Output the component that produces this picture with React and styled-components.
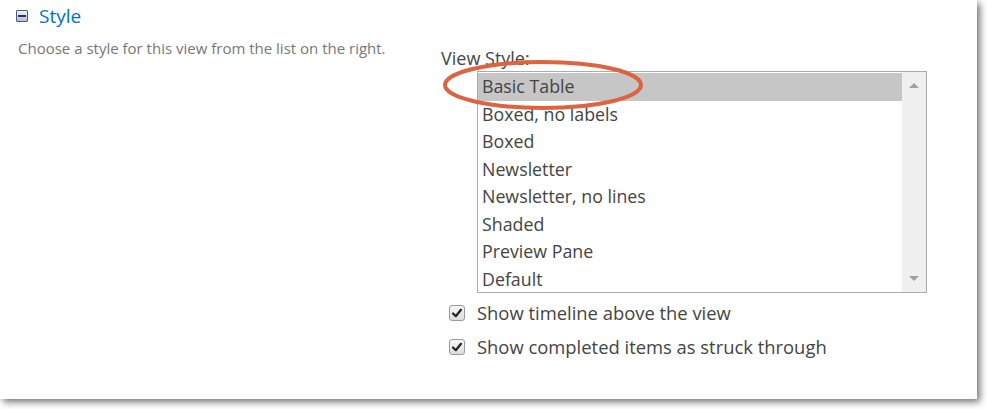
import React from "react";
import styled, { createGlobalStyle } from "styled-components";

const Global = createGlobalStyle`
  html, body { margin: 0; padding: 0; background: #fff; }
  body { font-family: "Open Sans", "Noto Sans", sans-serif; }
`;

const Frame = styled.div`
  width: 987px;
  height: 409px;
  background: #fff;
  overflow: hidden;
`;

const Page = styled.div`
  width: 977px;
  height: 399px;
  background: #fff;
  box-shadow: 3px 3px 7px rgba(0,0,0,0.55);
  box-sizing: border-box;
  padding: 4px 0 0 15px;
`;

const Header = styled.div`
  display: flex;
  align-items: center;
  gap: 11px;
  height: 24px;
`;

const Toggle = styled.span`
  width: 12px;
  height: 12px;
  box-sizing: border-box;
  border: 1px solid #4a5a78;
  border-radius: 1px;
  background: linear-gradient(#eef2f8, #b4bfd2);
  display: flex;
  align-items: center;
  justify-content: center;
  margin-left: 1px;
  &::after {
    content: "";
    width: 8px;
    height: 2px;
    background: #2a3550;
  }
`;

const Title = styled.span`
  font-family: "Open Sans", sans-serif;
  font-size: 19px;
  color: #0072c6;
  line-height: 24px;
`;

const Body = styled.div`
  display: grid;
  grid-template-columns: 426px 1fr;
  margin-top: 9px;
`;

const Description = styled.div`
  font-size: 15px;
  color: #777;
  padding-left: 3px;
  line-height: 22px;
`;

const Form = styled.div`
  display: flex;
  flex-direction: column;
  padding-top: 10px;
`;

const Label = styled.div`
  font-size: 18px;
  color: #444;
  line-height: 22px;
`;

const ListWrap = styled.div`
  position: relative;
  margin-left: 36px;
  width: 450px;
`;

const ListBox = styled.div`
  display: flex;
  height: 222px;
  box-sizing: border-box;
  border: 1px solid #ababab;
  background: #fff;
  margin-top: 2px;
`;

const Options = styled.div`
  flex: 1;
  padding-top: 1px;
`;

const Option = styled.div`
  font-size: 17.8px;
  color: #444;
  height: 27.5px;
  line-height: 27.5px;
  padding-left: 4px;
  background: ${p => (p.$selected ? "#c6c6c6" : "transparent")};
`;

const Scrollbar = styled.div`
  width: 24px;
  background: #f0f0f0;
  display: flex;
  flex-direction: column;
  justify-content: space-between;
  align-items: center;
  padding: 11px 0 11px;
  box-sizing: border-box;
`;

const Arrow = styled.span`
  width: 0;
  height: 0;
  border-left: 5px solid transparent;
  border-right: 5px solid transparent;
  ${p =>
    p.$up
      ? "border-bottom: 5px solid #a0a0a0;"
      : "border-top: 5px solid #a0a0a0;"}
`;

const Highlight = styled.svg`
  position: absolute;
  left: -36px;
  top: -12px;
  pointer-events: none;
`;

const Checks = styled.div`
  display: flex;
  flex-direction: column;
  gap: 12px;
  margin-top: 9px;
  margin-left: 8px;
`;

const CheckRow = styled.label`
  display: flex;
  align-items: center;
  gap: 12px;
  font-size: 18.4px;
  color: #444;
  line-height: 22px;
`;

const Box = styled.span`
  width: 16px;
  height: 16px;
  box-sizing: border-box;
  border: 1px solid #9a9a9a;
  border-radius: 3px;
  background: linear-gradient(#f6f6f6, #dcdcdc);
  display: flex;
  align-items: center;
  justify-content: center;
`;

const styles = [
  "Basic Table",
  "Boxed, no labels",
  "Boxed",
  "Newsletter",
  "Newsletter, no lines",
  "Shaded",
  "Preview Pane",
  "Default",
];

const Check = ({ children }) => (
  <CheckRow>
    <Box>
      <svg width="12" height="12" viewBox="0 0 12 12">
        <path d="M2 6.5 L4.8 9.2 L10 2.8" fill="none" stroke="#222" strokeWidth="2.2" strokeLinecap="round" strokeLinejoin="round" />
      </svg>
    </Box>
    {children}
  </CheckRow>
);

export default function App() {
  return (
    <>
      <Global />
      <Frame>
        <Page>
          <Header>
            <Toggle />
            <Title>Style</Title>
          </Header>
          <Body>
            <Description>Choose a style for this view from the list on the right.</Description>
            <Form>
              <Label>View Style:</Label>
              <ListWrap>
                <ListBox>
                  <Options>
                    {styles.map((s, i) => (
                      <Option key={s} $selected={i === 0}>{s}</Option>
                    ))}
                  </Options>
                  <Scrollbar>
                    <Arrow $up />
                    <Arrow />
                  </Scrollbar>
                </ListBox>
                <Highlight width="210" height="56" viewBox="0 0 210 56">
                  <ellipse cx="102" cy="28" rx="98" ry="23" fill="none" stroke="#dc6440" strokeWidth="4" />
                </Highlight>
              </ListWrap>
              <Checks>
                <Check>Show timeline above the view</Check>
                <Check>Show completed items as struck through</Check>
              </Checks>
            </Form>
          </Body>
        </Page>
      </Frame>
    </>
  );
}
